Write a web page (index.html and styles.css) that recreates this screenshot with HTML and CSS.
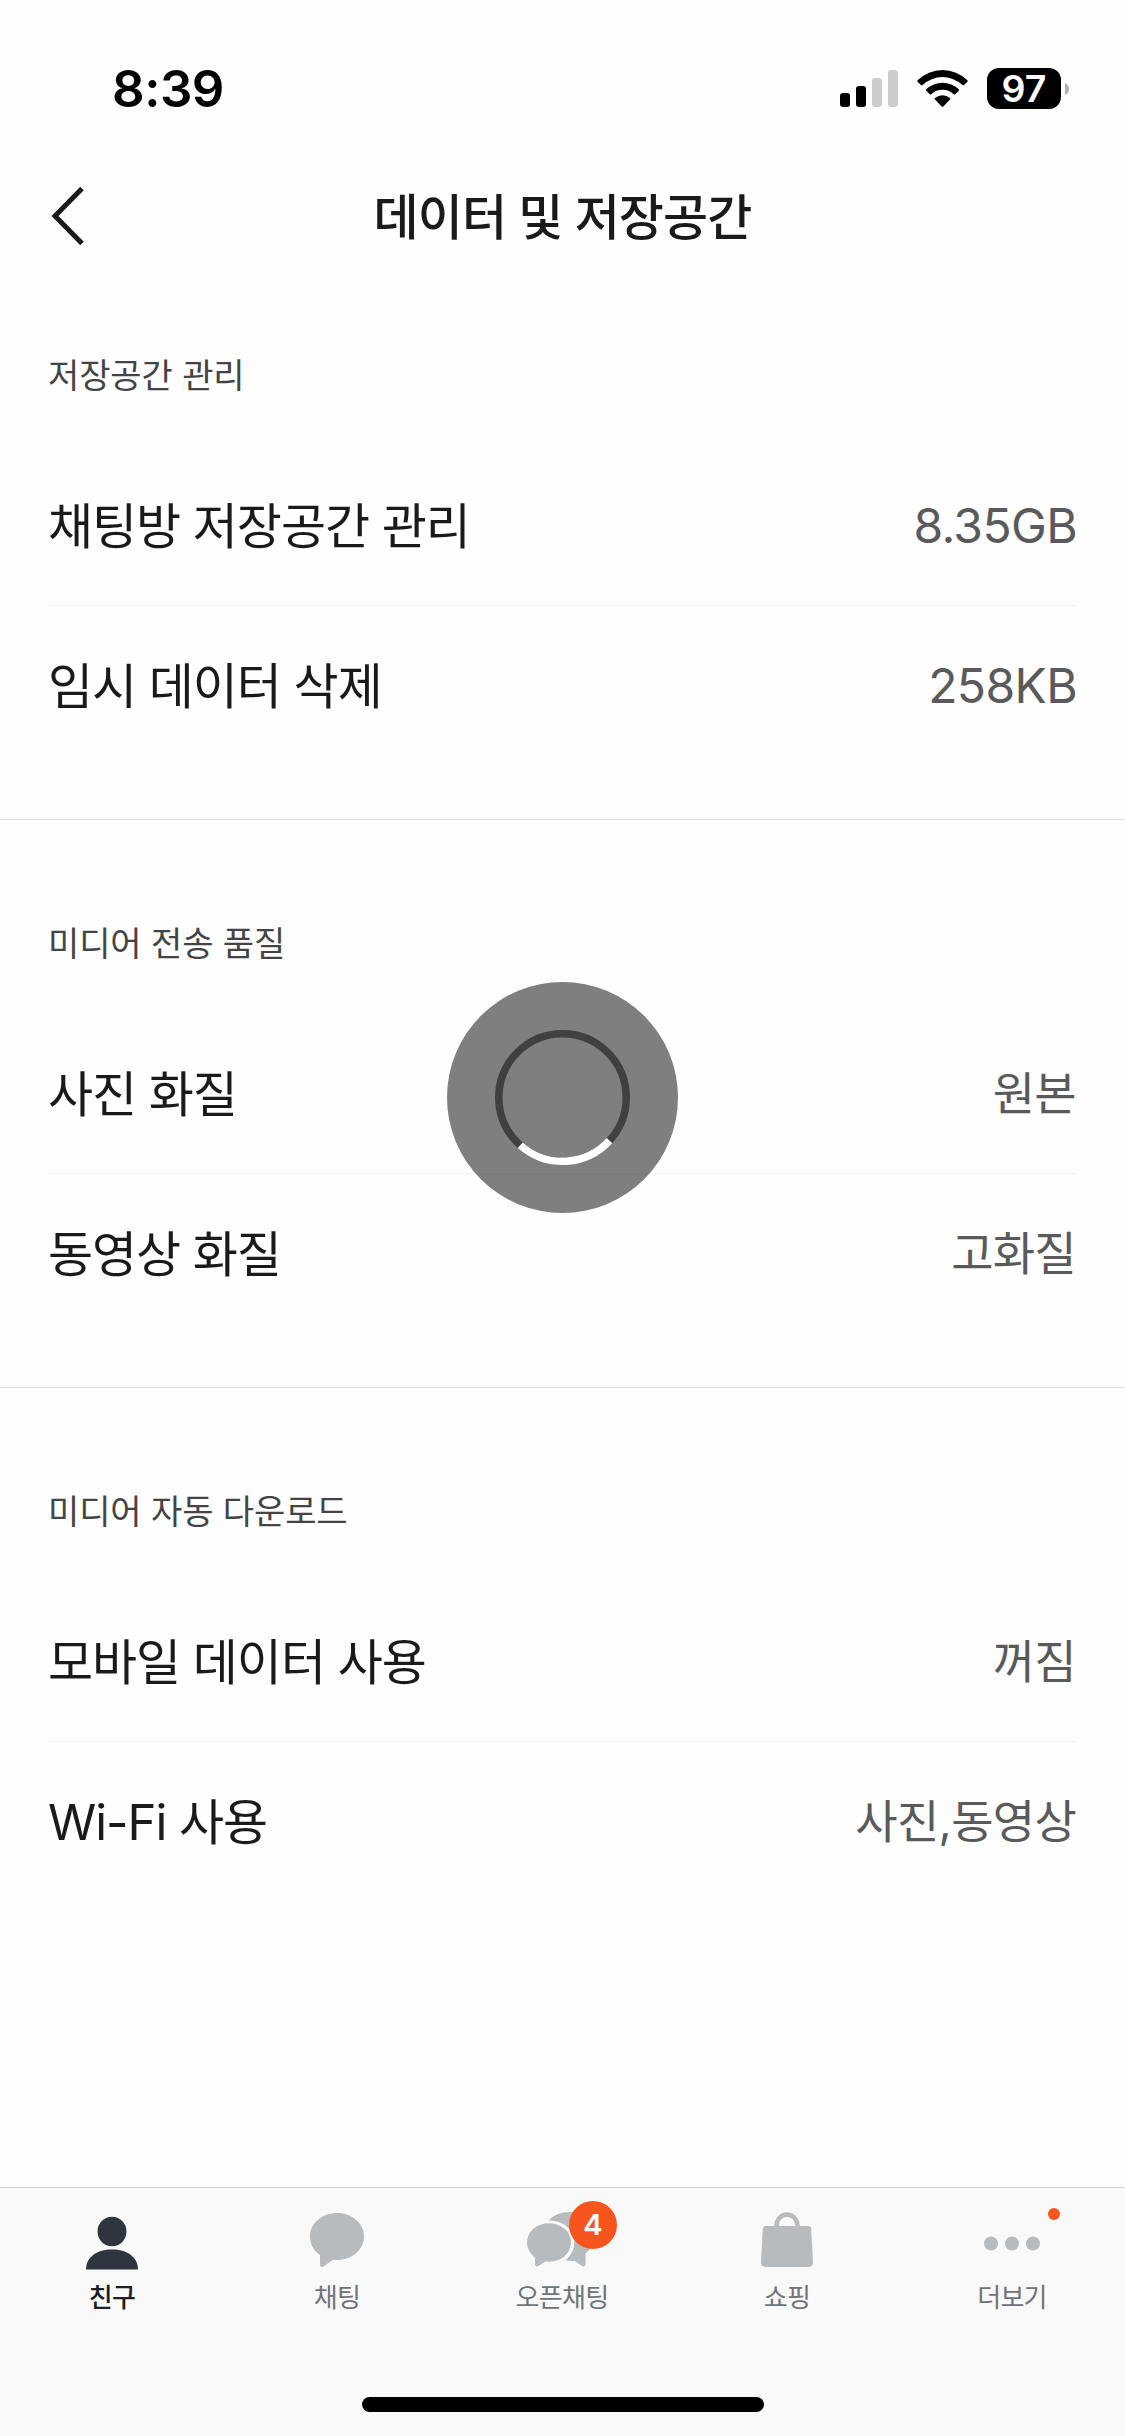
FILE: index.html
```html
<!DOCTYPE html>
<html lang="ko">
<head>
<meta charset="utf-8">
<title>데이터 및 저장공간</title>
<link rel="stylesheet" href="styles.css">
</head>
<body>
<div class="screen">
  <header class="status">
    <div class="time">8:39</div>
    <div class="status-icons">
      <svg class="signal" width="58" height="37" viewBox="0 0 58 37">
        <rect x="0" y="23" width="10" height="14" rx="3"/>
        <rect x="16" y="16" width="10" height="21" rx="3"/>
        <rect x="32" y="8" width="10" height="29" rx="3" fill="#ccc"/>
        <rect x="48" y="0" width="10" height="37" rx="3" fill="#ccc"/>
      </svg>
      <svg class="wifi" width="51" height="37" viewBox="0 0 51 37">
        <path d="M.6 10.200a35.500 35.500 0 0 1 49.800 0q.7.800 0 1.600l-3.300 3.300q-.8.700-1.600 0a29 29 0 0 0-40 0q-.8.700-1.600 0L.6 11.800q-.7-.8 0-1.600z"/>
        <path d="M9.300 19.200a23.500 23.500 0 0 1 32.400 0q.7.800 0 1.600l-3.400 3.400q-.8.700-1.600 0a16.500 16.500 0 0 0-22.400 0q-.8.700-1.600 0l-3.400-3.400q-.7-.8 0-1.600z"/>
        <path d="M18 28a11.800 11.800 0 0 1 15 0q.8.800 0 1.600l-6.700 6.800q-.8.700-1.600 0L18 29.600q-.8-.8 0-1.600z"/>
      </svg>
      <div class="battery">
        <div class="level">97</div>
        <svg width="4" height="12" viewBox="0 0 4 12"><path d="M0 0q4 1.500 4 6t-4 6z" fill="#b3b3b3"/></svg>
      </div>
    </div>
  </header>

  <nav class="title-bar">
    <svg class="back" width="34" height="60" viewBox="0 0 34 60">
      <path d="M31 2.500 4 30l27 27.500" fill="none" stroke="#1a1a1a" stroke-width="5"/>
    </svg>
    <h1>데이터 및 저장공간</h1>
  </nav>

  <main>
    <section>
      <h2>저장공간 관리</h2>
      <div class="row"><span class="name">채팅방 저장공간 관리</span><span class="value latin">8.35GB</span></div>
      <div class="row"><span class="name">임시 데이터 삭제</span><span class="value latin">258KB</span></div>
    </section>
    <section>
      <h2>미디어 전송 품질</h2>
      <div class="row"><span class="name">사진 화질</span><span class="value">원본</span></div>
      <div class="row"><span class="name">동영상 화질</span><span class="value">고화질</span></div>
    </section>
    <section>
      <h2>미디어 자동 다운로드</h2>
      <div class="row"><span class="name">모바일 데이터 사용</span><span class="value">꺼짐</span></div>
      <div class="row"><span class="name">Wi-Fi 사용</span><span class="value">사진,동영상</span></div>
    </section>
  </main>

  <footer class="tabs">
    <div class="tab-list">
      <div class="tab active">
        <svg width="60" height="60" viewBox="0 0 60 60">
          <ellipse cx="30" cy="21.500" rx="14.500" ry="14.700"/>
          <path d="M4 59.500C4 47 15 39.500 30 39.500S56 47 56 59.500z"/>
        </svg>
        <span>친구</span>
      </div>
      <div class="tab">
        <svg width="60" height="60" viewBox="0 0 60 60">
          <path d="M30 3C45 3 57 13.500 57 26.500S45 50 30 50Q28 50 26 49.700L16.500 56.500Q13 58 13 54.500V45C6.500 40.500 3 34 3 26.500 3 13.500 15 3 30 3z"/>
        </svg>
        <span>채팅</span>
      </div>
      <div class="tab">
        <svg width="72" height="60" viewBox="0 0 72 60">
          <path d="M44 2C58 2 68 12 68 25Q68 37 59.500 43.500V53.500Q59.500 57.500 56 56L48.500 50.700Q45 51.300 39.500 50.300C50 42 51 27 43 18.500Q35 10 22.500 10.500Q30 2 44 2z"/>
          <ellipse cx="23" cy="32.500" rx="22" ry="19.300"/>
          <path d="M9 43V53.500Q9 57.500 12.500 56L20 51z"/>
        </svg>
        <b class="badge">4</b>
        <span>오픈채팅</span>
      </div>
      <div class="tab">
        <svg width="60" height="60" viewBox="0 0 60 60">
          <path d="M19.500 19V15.500a10.500 11 0 0 1 21 0V19" fill="none" stroke="#b7bbbe" stroke-width="4.500"/>
          <path d="M8.500 16h43q2.500 0 2.700 3l1.800 33q0 5-4.500 5h-43Q4 57 4 52l1.800-33q.2-3 2.700-3z"/>
        </svg>
        <span>쇼핑</span>
      </div>
      <div class="tab">
        <svg width="60" height="60" viewBox="0 0 60 60">
          <circle cx="9" cy="33.500" r="7"/><circle cx="30" cy="33.500" r="7"/><circle cx="51" cy="33.500" r="7"/>
        </svg>
        <i class="dot"></i>
        <span>더보기</span>
      </div>
    </div>
    <div class="home-indicator"></div>
  </footer>

  <svg class="spinner" width="231" height="231" viewBox="-115.500 -115.500 231 231">
    <circle r="115.500" fill="#000" fill-opacity=".5"/>
    <circle r="63.750" fill="none" stroke="#404040" stroke-width="7.500"/>
    <path d="M47 43.100A63.750 63.750 0 0 1-42.300 47.700" fill="none" stroke="#fff" stroke-width="7.500"/>
  </svg>
</div>
</body>
</html>
```

FILE: styles.css
```css
* { box-sizing: border-box; }

body {
  margin: 0;
  background: #fefefe;
  color: #1a1a1a;
  font-family: Inter, "Noto Sans CJK KR", sans-serif;
}

.screen {
  position: relative;
  display: flex;
  flex-direction: column;
  width: 1125px;
  height: 2436px;
  overflow: hidden;
}

.status {
  display: flex;
  justify-content: space-between;
  height: 177px;
  padding: 68px 56px 0 112px;
  color: #000;
}

.time {
  font-size: 51px;
  font-weight: 600;
  line-height: 42px;
  letter-spacing: -0.5px;
}

.status-icons {
  display: flex;
  align-items: center;
  height: 41px;
}

.wifi { margin: 0 19px; }

.battery {
  display: flex;
  align-items: center;
  gap: 4px;
}

.level {
  width: 74px;
  height: 41px;
  border-radius: 12px;
  background: #000;
  color: #fff;
  font-size: 37.5px;
  font-weight: 600;
  line-height: 41px;
  text-align: center;
}

.title-bar {
  display: grid;
  grid-template-columns: 150px 1fr 150px;
  align-items: center;
  height: 75px;
}

.back { margin: 2px 0 0 51px; }

h1 {
  margin: 6px 0 0;
  font-size: 49px;
  font-weight: 500;
  line-height: 60px;
  letter-spacing: -0.9px;
  text-align: center;
}

section {
  height: 568px;
  padding: 104px 48px 54px;
  border-bottom: 1px solid #dedede;
}

section:last-child { border-bottom: 0; }

h2 {
  margin: 0 0 50px;
  color: #444;
  font-size: 34px;
  font-weight: 400;
  line-height: 40px;
  letter-spacing: -0.1px;
}

.row {
  display: flex;
  align-items: center;
  justify-content: space-between;
  height: 159px;
  line-height: 60px;
}

h2 + .row {
  height: 160px;
  border-bottom: 1px solid #f3f3f3;
}

.name {
  padding-top: 2px;
  font-size: 49px;
  letter-spacing: -1.05px;
}

.value {
  padding: 0 1px 1px 0;
  color: #5a5a5a;
  font-size: 46px;
  letter-spacing: -0.7px;
}

.latin {
  padding: 0;
  font-size: 48px;
  letter-spacing: -0.6px;
}

.tabs {
  display: flex;
  flex-direction: column;
  align-items: center;
  height: 249px;
  margin-top: auto;
  border-top: 1px solid #d5d5d5;
  background: #f9f9f9;
}

.tab-list {
  display: grid;
  grid-template-columns: repeat(5, 225px);
  width: 1125px;
  height: 209px;
  padding-top: 22px;
}

.tab {
  position: relative;
  display: flex;
  flex-direction: column;
  align-items: center;
  gap: 10px;
  padding-right: 1px;
  color: #6e7479;
  font-size: 26px;
  line-height: 36px;
  letter-spacing: -0.7px;
}

.tab svg {
  overflow: visible;
  fill: #b7bbbe;
}

.tab.active { color: #1c1f25; font-weight: 500; }
.tab.active svg { fill: #2f353e; }

.badge {
  position: absolute;
  top: -9px;
  left: 119px;
  width: 48px;
  height: 48px;
  border-radius: 50%;
  background: #f6551e;
  color: #fff;
  font-size: 29px;
  font-weight: 600;
  line-height: 48px;
  letter-spacing: 0;
  text-align: center;
}

.dot {
  position: absolute;
  top: -2px;
  left: 148px;
  width: 12px;
  height: 12px;
  border-radius: 50%;
  background: #f6551e;
}

.home-indicator {
  width: 402px;
  height: 15px;
  border-radius: 8px;
  background: #000;
}

.spinner {
  position: absolute;
  top: 982px;
  left: 447px;
}
```
